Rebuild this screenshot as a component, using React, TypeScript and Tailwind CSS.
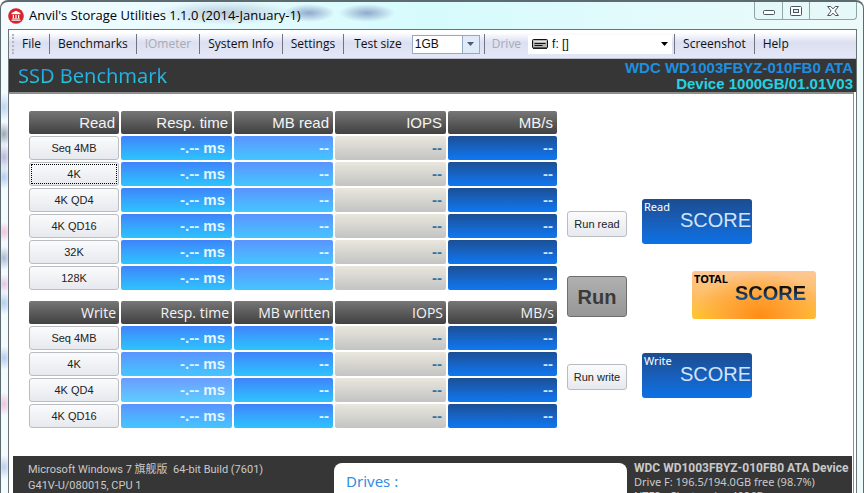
import { ReactNode } from "react";
import clsx from "clsx";

const readRows = ["Seq 4MB", "4K", "4K QD4", "4K QD16", "32K", "128K"];
const writeRows = ["Seq 4MB", "4K", "4K QD4", "4K QD16"];

const deepSky = "bg-linear-to-b from-[#3f83fb] to-[#2bc4fd]";
const softSky = "bg-linear-to-b from-[#5a93ff] to-[#42c6ff]";
const paleSky = "bg-linear-to-b from-[#6b9cff] to-[#5ccdff]";

const readTones = readRows.map(() => ({ time: deepSky, mb: softSky }));
const writeTones = [
  { time: deepSky, mb: deepSky },
  { time: softSky, mb: deepSky },
  { time: paleSky, mb: deepSky },
  { time: softSky, mb: deepSky },
];

function AppIcon() {
  return (
    <svg viewBox="0 0 16 16" className="size-4 shrink-0" aria-hidden="true">
      <circle cx="8" cy="8" r="7.8" fill="#d8232a" />
      <path d="M8 2.8 12.4 5v1.2H3.6V5z" fill="#fff" />
      <path d="M4.8 7h1.2v3.4H4.8zM7.4 7h1.2v3.4H7.4zM10 7h1.2v3.4H10z" fill="#fff" />
      <path d="M4.2 10.4h7.6v.8H4.2zM3.6 11.7h8.8v1H3.6z" fill="#fff" />
    </svg>
  );
}

function DriveIcon() {
  return (
    <svg viewBox="0 0 16 10" className="h-[10px] w-4 shrink-0" aria-hidden="true">
      <rect x="0.5" y="0.5" width="15" height="8.5" rx="1" fill="#b5b5b5" stroke="#111" />
      <path d="M2.5 4.5h11M2.5 6.5h8" stroke="#111" />
      <path d="M2 2.5h12" stroke="#e4e4e4" />
      <path d="M1 9.4h14" stroke="#111" />
    </svg>
  );
}

function WindowButtons() {
  return (
    <div className="mr-[6px] flex h-[18px] self-start rounded-b border border-t-0 border-[#8fa5a8] bg-[#e3f6f6]/60">
      <button aria-label="Minimize" className="flex w-[27px] items-center justify-center">
        <svg viewBox="0 0 12 5" className="mt-1 h-[5px] w-3">
          <rect x="0.5" y="0.5" width="11" height="4" rx="1" fill="#fff" stroke="#4a5563" />
        </svg>
      </button>
      <button aria-label="Maximize" className="flex w-7 items-center justify-center border-x border-[#8fa5a8]">
        <svg viewBox="0 0 12 10" className="h-[10px] w-3">
          <rect x="0.5" y="0.5" width="11" height="9" rx="1" fill="#fff" stroke="#4a5563" />
          <rect x="3.5" y="3.5" width="5" height="3" fill="#dff3f4" stroke="#4a5563" />
        </svg>
      </button>
      <button aria-label="Close" className="flex w-[46px] items-center justify-center">
        <svg viewBox="0 0 12 10" className="h-[10px] w-3">
          <path
            d="M.6.5h3.2L6 2.9 8.2.5h3.2L7.9 5l3.5 4.5H8.2L6 7.1 3.8 9.5H.6L4.1 5z"
            fill="#fff"
            stroke="#4a5563"
            strokeLinejoin="round"
          />
        </svg>
      </button>
    </div>
  );
}

function MenuItem({ children, disabled }: { children: ReactNode; disabled?: boolean }) {
  return (
    <button
      disabled={disabled}
      className="h-5 shrink-0 whitespace-nowrap border-r border-[#6f7480] px-2 leading-5 disabled:text-[#a9abb3]"
    >
      {children}
    </button>
  );
}

function MenuBar() {
  return (
    <nav className="flex h-[29px] shrink-0 items-center border-b border-[#b9bdcc] bg-linear-to-b from-white from-10% via-[#dbdff1] via-45% to-[#e4e8f6] font-['Open_Sans','Noto_Sans',sans-serif] text-xs text-[#111]">
      <div className="ml-[3px] h-5 w-[2px] shrink-0 border-l-2 border-dotted border-[#b3b7c4]" />
      <MenuItem>File</MenuItem>
      <MenuItem>Benchmarks</MenuItem>
      <MenuItem disabled>IOmeter</MenuItem>
      <MenuItem>System Info</MenuItem>
      <MenuItem>Settings</MenuItem>
      <label htmlFor="test-size" className="shrink-0 px-[10px]">
        Test size
      </label>
      <div className="relative h-[19px] w-[68px] shrink-0 border border-[#93a9c4] bg-white">
        <select
          id="test-size"
          className="block size-full appearance-none pl-[2px] font-['Liberation_Sans',sans-serif] text-xs leading-4"
        >
          <option>1GB</option>
        </select>
        <span className="pointer-events-none absolute inset-y-0 right-0 flex w-[17px] items-center justify-center border-l border-[#93a9c4] bg-[#dfebf9]">
          <svg viewBox="0 0 7 4" className="h-1 w-[7px]">
            <path d="M0 0h7L3.5 4z" fill="#4b5b75" />
          </svg>
        </span>
      </div>
      <div className="ml-1 h-5 border-l border-[#6f7480]" />
      <label htmlFor="drive" className="shrink-0 px-[7px] text-[#a9abb3]">
        Drive
      </label>
      <div className="relative flex h-[19px] w-[144px] shrink-0 items-center bg-white pl-1">
        <DriveIcon />
        <select
          id="drive"
          className="h-full flex-1 appearance-none pl-1 font-['Liberation_Sans',sans-serif] text-xs leading-4"
        >
          <option>f: []</option>
        </select>
        <svg viewBox="0 0 7 4" className="pointer-events-none absolute right-1 h-1 w-[7px]">
          <path d="M0 0h7L3.5 4z" fill="#000" />
        </svg>
      </div>
      <div className="ml-[2px] h-5 border-l border-[#6f7480]" />
      <MenuItem>Screenshot</MenuItem>
      <button className="h-5 px-2 leading-5">Help</button>
    </nav>
  );
}

type ResultTableProps = {
  headings: string[];
  rows: string[];
  tones: { time: string; mb: string }[];
  focused?: string;
  headFont: string;
};

function ResultTable({ headings, rows, tones, focused, headFont }: ResultTableProps) {
  const cell = "rounded-[2px] py-0 text-right font-bold leading-6";
  return (
    <table className="w-[532px] table-fixed border-separate border-spacing-[2px]">
      <colgroup>
        <col className="w-[90px]" />
        <col className="w-[111px]" />
        <col className="w-[99px]" />
        <col className="w-[111px]" />
        <col />
      </colgroup>
      <thead>
        <tr>
          {headings.map((heading) => (
            <th
              key={heading}
              scope="col"
              className={clsx(
                "h-[23px] rounded-[2px] bg-linear-to-b from-[#777] to-[#414141] p-0 text-right font-normal whitespace-nowrap text-[#f4f4f4]",
                headFont,
              )}
            >
              {heading}
            </th>
          ))}
        </tr>
      </thead>
      <tbody className="font-['Liberation_Sans',Arial,sans-serif] text-[15px]">
        {rows.map((row, i) => (
          <tr key={row}>
            <th scope="row" className="p-0">
              <button className="block h-6 w-full rounded-[3px] border border-[#b9bcc1] bg-linear-to-b from-[#fbfbfc] to-[#e6e9ee] p-px text-[11px] font-normal text-[#222]">
                <span
                  className={clsx(
                    "flex size-full items-center justify-center",
                    row === focused && "border border-dotted border-black",
                  )}
                >
                  {row}
                </span>
              </button>
            </th>
            <td className={clsx(cell, "pr-[7px] text-[#e4f6ff]", tones[i].time)}>-.-- ms</td>
            <td className={clsx(cell, "pr-1 text-[#e4f6ff]", tones[i].mb)}>--</td>
            <td className={clsx(cell, "bg-linear-to-b from-[#e9e7dd] to-[#c3c3c3] pr-1 text-[#2b74ad]")}>--</td>
            <td className={clsx(cell, "bg-linear-to-b from-[#1b4f95] to-[#0b78f4] pr-1 text-[#cfe6ff]")}>--</td>
          </tr>
        ))}
      </tbody>
    </table>
  );
}

function ScoreTile({ label, className }: { label: string; className?: string }) {
  return (
    <div
      className={clsx(
        "relative flex h-[45px] w-[110px] items-center justify-end rounded-[3px] bg-linear-to-b from-[#1c4c90] to-[#0a72e6] pr-px pb-1 text-xl text-[#d3e4fa]",
        className,
      )}
    >
      <span className="absolute top-[2px] left-[2px] font-['Noto_Sans',sans-serif] text-[11px] leading-3 text-white">
        {label}
      </span>
      SCORE
    </div>
  );
}

function RunButton({ children, className }: { children: ReactNode; className?: string }) {
  return (
    <button
      className={clsx(
        "h-[26px] w-[60px] rounded-[3px] border border-[#b9bcc1] bg-linear-to-b from-[#fbfbfc] to-[#e6e9ee] text-[11px] text-[#222]",
        className,
      )}
    >
      {children}
    </button>
  );
}

function Benchmark() {
  return (
    <main className="mr-[2px] flex shrink-0 border-t-2 border-r border-t-[#8e8e8e] border-r-[#8a8d96] bg-white pb-[26px] pl-[18px] font-['Liberation_Sans',Arial,sans-serif]">
      <div className="flex shrink-0 flex-col gap-[7px] pt-[15px]">
        <ResultTable
          headings={["Read", "Resp. time", "MB read", "IOPS", "MB/s"]}
          rows={readRows}
          tones={readTones}
          focused="4K"
          headFont="pr-1 font-['Liberation_Sans',Arial,sans-serif] text-[15px] leading-5"
        />
        <ResultTable
          headings={["Write", "Resp. time", "MB written", "IOPS", "MB/s"]}
          rows={writeRows}
          tones={writeTones}
          headFont="pr-[3px] font-['Open_Sans','Noto_Sans',sans-serif] text-sm leading-5"
        />
      </div>
      <div className="ml-2 flex shrink-0 flex-col pt-[117px]">
        <RunButton>Run read</RunButton>
        <button className="mt-[39px] h-[41px] w-[60px] rounded-[3px] border border-[#6e6e6e] bg-linear-to-b from-[#b0b0b0] to-[#979797] text-xl font-bold text-[#3a3a3a]">
          Run
        </button>
        <RunButton className="mt-[47px]">Run write</RunButton>
      </div>
      <div className="ml-[15px] flex shrink-0 flex-col pt-[105px]">
        <ScoreTile label="Read" />
        <div className="relative mt-[27px] ml-[50px] flex h-12 w-[124px] items-center justify-end rounded-[3px] bg-[radial-gradient(ellipse_at_55%_95%,#ff8c14_0%,#ffa233_30%,transparent_70%),linear-gradient(to_bottom,#fcc795,#ffbd5c_60%,#ffc72c)] pr-[10px] pb-1 text-xl font-bold">
          <span className="absolute top-[2px] left-[2px] font-['Noto_Sans',sans-serif] text-[11px] leading-3 text-black">
            TOTAL
          </span>
          <span className="bg-linear-to-b from-[#111] from-30% to-[#0d5cab] to-80% bg-clip-text leading-6 text-transparent">
            SCORE
          </span>
        </div>
        <ScoreTile label="Write" className="mt-[34px]" />
      </div>
    </main>
  );
}

export default function App() {
  return (
    <div className="flex h-screen flex-col overflow-hidden rounded-t-lg border border-t-2 border-b-0 border-[#5d6b70] bg-[radial-gradient(ellipse_8px_14px_at_3px_105px,#bcd4f2,transparent),radial-gradient(ellipse_8px_12px_at_3px_132px,#9aa6b4,transparent),radial-gradient(ellipse_8px_14px_at_3px_155px,#b9b6dc,transparent),radial-gradient(ellipse_8px_12px_at_3px_175px,#b4cdee,transparent),radial-gradient(ellipse_8px_10px_at_3px_230px,#f0c4dd,transparent),radial-gradient(ellipse_8px_12px_at_3px_256px,#a9b9d4,transparent),radial-gradient(ellipse_8px_10px_at_3px_282px,#e4c6e6,transparent),radial-gradient(ellipse_8px_12px_at_3px_301px,#b4cdee,transparent),radial-gradient(ellipse_8px_12px_at_3px_356px,#b4cdee,transparent),radial-gradient(ellipse_8px_12px_at_3px_402px,#ecc4de,transparent),radial-gradient(ellipse_8px_12px_at_3px_465px,#bccdf0,transparent),linear-gradient(to_right,#f4fbff,#d6fbfd_50%,#eefafa)]">
      <header className="flex h-[27px] shrink-0 items-center bg-[radial-gradient(ellipse_26px_9px_at_308px_11px,#8fa9cc_0%,transparent_100%),radial-gradient(ellipse_28px_9px_at_366px_11px,#8fa9cc_0%,transparent_100%),radial-gradient(ellipse_70px_12px_at_225px_11px,#b9cbdc_0%,transparent_100%)] pl-[7px]">
        <AppIcon />
        <h1 className="flex-1 pl-[5px] font-['Open_Sans','Noto_Sans',sans-serif] text-[13px] text-black">
          Anvil's Storage Utilities 1.1.0 (2014-January-1)
        </h1>
        <WindowButtons />
      </header>
      <div className="mr-[6px] ml-[7px] flex min-h-0 flex-1 flex-col border border-b-0 border-[#6d7478] bg-white">
        <MenuBar />
        <section className="flex h-[33px] shrink-0 items-center justify-between bg-[#363636] pr-[3px] pl-[9px]">
          <h2 className="bg-linear-to-b from-[#2b83de] to-[#20e2dc] bg-clip-text font-['Noto_Sans',sans-serif] text-xl leading-7 text-transparent">
            SSD Benchmark
          </h2>
          <div className="text-right font-['Liberation_Sans',Arial,sans-serif] text-[15px] leading-4 font-bold">
            <p className="text-[#1e8fe0]">WDC WD1003FBYZ-010FB0 ATA</p>
            <p className="text-[#23d3e2]">Device 1000GB/01.01V03</p>
          </div>
        </section>
        <Benchmark />
        <footer className="mr-[2px] flex min-h-0 flex-1 overflow-hidden border-r border-[#8a8d96] pr-px pl-1 font-['Noto_Sans','Noto_Sans_CJK_SC',sans-serif] text-[11px] leading-4 whitespace-nowrap text-[#c9c9c9]">
          <div className="flex min-w-0 flex-1 bg-[#363636]">
            <div className="w-[321px] shrink-0 pt-[6px] pl-[15px] font-['Roboto','Noto_Sans_CJK_SC',sans-serif]">
              <p className="whitespace-pre">Microsoft Windows 7 旗舰版  64-bit Build (7601)</p>
              <p>G41V-U/080015, CPU 1</p>
            </div>
            <div className="mt-[7px] h-20 w-[293px] shrink-0 rounded-lg bg-white px-3 pt-[6px] text-[15px] leading-6 text-[#2f8fe0]">
              Drives :
            </div>
            <div className="pt-[5px] pl-[7px] leading-[14px]">
              <p className="font-['Roboto',sans-serif] text-xs leading-[14px] font-bold">
                WDC WD1003FBYZ-010FB0 ATA Device
              </p>
              <p>Drive F: 196.5/194.0GB free (98.7%)</p>
              <p>NTFS - Cluster size 4096B</p>
            </div>
          </div>
        </footer>
      </div>
    </div>
  );
}
